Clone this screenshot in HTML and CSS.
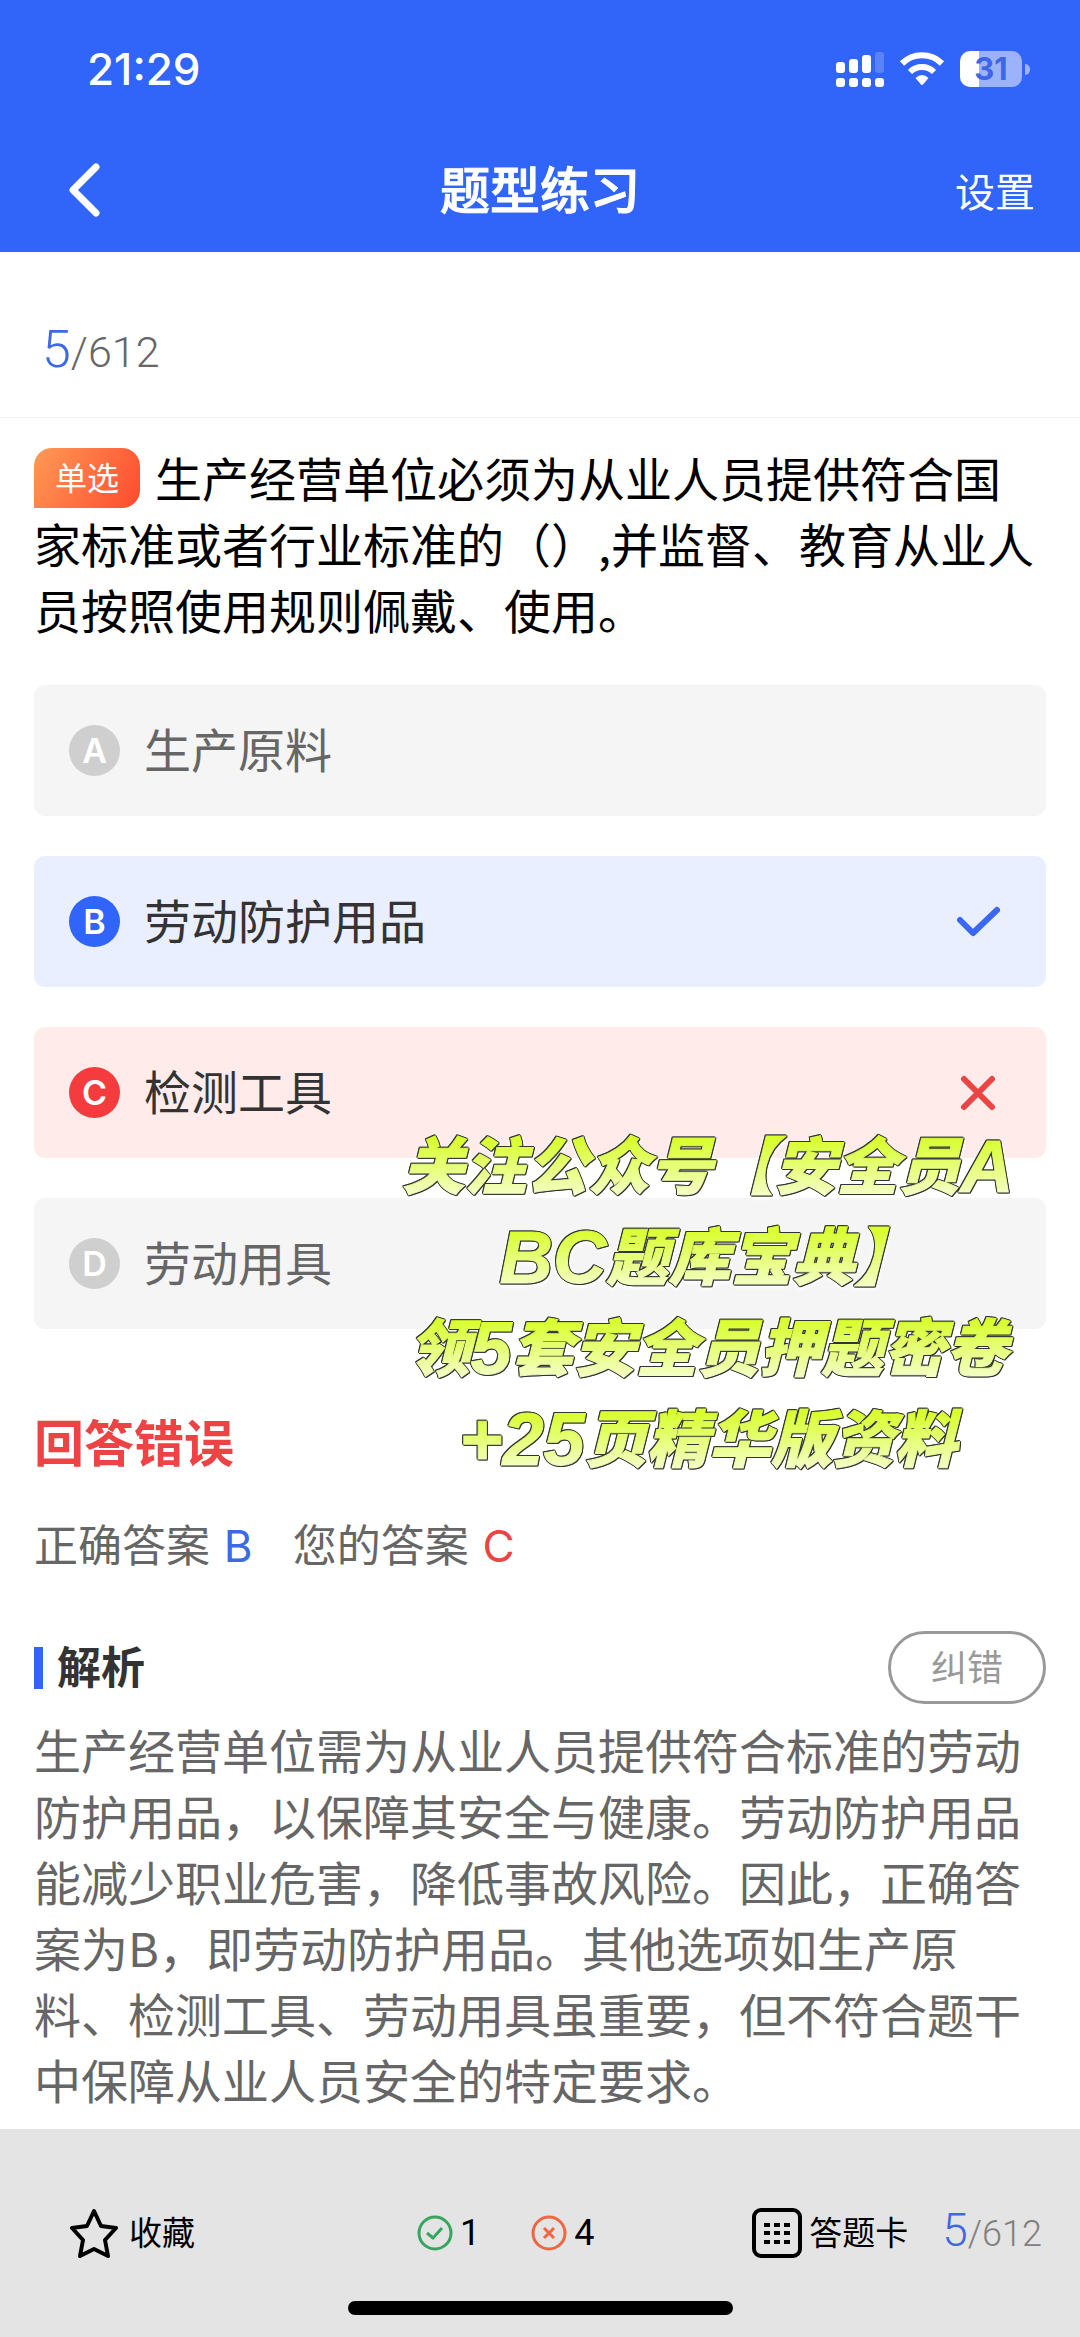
FILE: index.html
```html
<!DOCTYPE html>
<html lang="zh-CN">

<head>
    <meta charset="UTF-8">
    <meta name="viewport" content="width=device-width, initial-scale=1.0">
    <title>题型练习</title>
    <link rel="stylesheet" href="styles.css">
</head>

<body>
    <header class="header">
        <div class="status-bar">
            <span class="time">21:29</span>
            <div class="status-icons">
                <svg class="signal" width="48" height="36" viewBox="0 0 48 36" fill="#fff">
                    <rect x="0" y="11" width="9" height="11" rx="3" />
                    <rect x="13" y="8" width="9" height="14" rx="3" />
                    <rect x="26" y="4" width="9" height="18" rx="3" />
                    <rect x="39" y="1" width="9" height="21" rx="3" opacity="0.2" />
                    <rect x="0" y="27" width="9" height="9" rx="3" />
                    <rect x="13" y="27" width="9" height="9" rx="3" />
                    <rect x="26" y="27" width="9" height="9" rx="3" />
                    <rect x="39" y="27" width="9" height="9" rx="3" />
                </svg>
                <svg class="wifi" width="46" height="36" viewBox="0 0 46 36">
                    <path d="M3 12.500A28.500 28.500 0 0 1 43 12.500" fill="none" stroke="#fff" stroke-width="6" />
                    <path d="M11 21A17 17 0 0 1 35 21" fill="none" stroke="#fff" stroke-width="6" />
                    <path d="M16.500 27Q23 21 29.500 27L24 33.500Q23 34.500 22 33.500Z" fill="#fff" />
                </svg>
                <div class="battery">
                    <div class="battery-body">31</div>
                    <div class="battery-cap"></div>
                </div>
            </div>
        </div>
        <nav class="nav">
            <button class="back" aria-label="返回">
                <svg width="34" height="56" viewBox="0 0 34 56" fill="none" stroke="#fff" stroke-width="7"
                    stroke-linecap="round" stroke-linejoin="round">
                    <path d="M29 5L6 28L29 51" />
                </svg>
            </button>
            <h1 class="title">题型练习</h1>
            <a href="#" class="settings">设置</a>
        </nav>
    </header>

    <div class="progress"><span class="current">5</span>/612</div>

    <main class="content">
        <p class="question"><span class="tag">单选</span>生产经营单位必须为从业人员提供符合国家标准或者行业标准的（）,并监督、教育从业人员按照使用规则佩戴、使用。</p>

        <div class="options">
            <button class="option">
                <span class="letter">A</span>
                <span class="option-text">生产原料</span>
            </button>
            <button class="option right">
                <span class="letter">B</span>
                <span class="option-text">劳动防护用品</span>
                <svg class="mark" width="44" height="44" viewBox="0 0 44 44" fill="none" stroke="#3a68f2"
                    stroke-width="6" stroke-linecap="round" stroke-linejoin="round">
                    <path d="M4 20L17 33L41 10" />
                </svg>
            </button>
            <button class="option wrong">
                <span class="letter">C</span>
                <span class="option-text">检测工具</span>
                <svg class="mark" width="44" height="44" viewBox="0 0 44 44" fill="none" stroke="#ea4545"
                    stroke-width="6" stroke-linecap="round">
                    <path d="M8 8L36 36M36 8L8 36" />
                </svg>
            </button>
            <button class="option">
                <span class="letter">D</span>
                <span class="option-text">劳动用具</span>
            </button>

            <div class="promo">
                <span class="promo-line">关注公众号【安全员<span class="latin">A</span></span>
                <span class="promo-line"><span class="latin">BC</span>题库宝典】</span>
                <span class="promo-line">领<span class="latin">5</span>套安全员押题密卷</span>
                <span class="promo-line"><span class="latin">+25</span>页精华版资料</span>
            </div>
        </div>

        <h2 class="result">回答错误</h2>
        <div class="answers">
            <span>正确答案 <b class="blue">B</b></span>
            <span>您的答案 <b class="red">C</b></span>
        </div>

        <div class="analysis-head">
            <h3 class="analysis-title">解析</h3>
            <button class="report">纠错</button>
        </div>
        <p class="analysis">生产经营单位需为从业人员提供符合标准的劳动防护用品，以保障其安全与健康。劳动防护用品能减少职业危害，降低事故风险。因此，正确答案为B，即劳动防护用品。其他选项如生产原料、检测工具、劳动用具虽重要，但不符合题干中保障从业人员安全的特定要求。</p>
    </main>

    <footer class="footer">
        <div class="toolbar">
            <button class="tool">
                <svg class="star" width="50" height="50" viewBox="0 0 50 50" fill="none" stroke="#000"
                    stroke-width="4" stroke-linejoin="round">
                    <path d="M25 3L32 18L47 20L36 32L39 48L25 41L11 48L14 32L3 20L18 18Z" />
                </svg>
                <span class="tool-text">收藏</span>
            </button>
            <div class="counts">
                <span class="count">
                    <svg width="36" height="36" viewBox="0 0 36 36" fill="none" stroke="#35a660" stroke-width="3">
                        <circle cx="18" cy="18" r="16" />
                        <path d="M10 18L16 23L25 13" />
                    </svg>
                    1
                </span>
                <span class="count">
                    <svg width="36" height="36" viewBox="0 0 36 36" fill="none" stroke="#f26540" stroke-width="3">
                        <circle cx="18" cy="18" r="16" />
                        <path d="M13 13L23 23M23 13L13 23" />
                    </svg>
                    4
                </span>
            </div>
            <div class="sheet">
                <button class="tool">
                    <svg width="50" height="50" viewBox="0 0 50 50">
                        <rect x="2" y="2" width="46" height="46" rx="7" fill="none" stroke="#000" stroke-width="4" />
                        <path d="M12 17H38M12 25H38M12 34H38" stroke="#000" stroke-width="4" stroke-dasharray="6 4" />
                    </svg>
                    <span class="tool-text">答题卡</span>
                </button>
                <span class="page"><span class="current">5</span>/612</span>
            </div>
        </div>
        <div class="home-bar"></div>
    </footer>
</body>

</html>
```
FILE: styles.css
```css
:root {
    --blue: #3164f8;
    --red: #f43c3f;
    --text: #333;
    --gray: #666;
    --light-gray: #999;
}

* {
    margin: 0;
    padding: 0;
    box-sizing: border-box;
}

body {
    font-family: "Noto Sans CJK SC", sans-serif;
    background: #fff;
    color: #000;
}

button {
    font-family: inherit;
    border: none;
    background: none;
    cursor: pointer;
}

svg {
    display: block;
    flex-shrink: 0;
}

/* header */
.header {
    background: var(--blue);
    color: #fff;
    padding-bottom: 10px;
}

.status-bar {
    display: flex;
    justify-content: space-between;
    align-items: center;
    height: 138px;
    padding: 0 50px 0 87px;
}

.time {
    font-family: Inter, sans-serif;
    font-size: 44px;
    font-weight: 500;
}

.status-icons {
    display: flex;
    align-items: center;
    gap: 15px;
}

.battery {
    display: flex;
    align-items: center;
    gap: 3px;
}

.battery-body {
    width: 62px;
    height: 36px;
    border-radius: 10px;
    background: linear-gradient(90deg, #fff 31%, #9cb3fb 31%);
    color: #3e66e8;
    font-family: Inter, sans-serif;
    font-size: 31px;
    font-weight: 700;
    line-height: 36px;
    text-align: center;
}

.battery-cap {
    width: 5px;
    height: 11px;
    border-radius: 0 6px 6px 0;
    background: #9cb3fb;
}

.nav {
    display: grid;
    grid-template-columns: 1fr auto 1fr;
    align-items: center;
    height: 104px;
    padding: 0 45px;
}

.back {
    justify-self: start;
    padding-left: 22px;
}

.title {
    padding-bottom: 6px;
    font-size: 50px;
    font-weight: 500;
    line-height: 66px;
    -webkit-text-stroke: 1px #fff;
}

.settings {
    justify-self: end;
    color: #fff;
    font-size: 40px;
    text-decoration: none;
}

/* progress */
.progress {
    padding: 67px 42px 32px;
    border-bottom: 1px solid #f2f2f2;
    color: var(--gray);
    font-family: Roboto, sans-serif;
    font-size: 43px;
    font-weight: 300;
    line-height: 66px;
}

.current {
    color: #3d68e6;
    font-size: 52px;
    line-height: 1;
}

/* question */
.content {
    padding: 26px 34px 17px;
}

.question,
.analysis {
    font-size: 47px;
    line-height: 66px;
}

.tag {
    display: inline-block;
    width: 106px;
    height: 60px;
    margin: 4px 15px 0 0;
    border-radius: 18px 18px 18px 0;
    background: linear-gradient(120deg, #ff9a56, #ff4a2e);
    color: #fff;
    font-size: 32px;
    line-height: 56px;
    text-align: center;
    vertical-align: top;
}

.options {
    position: relative;
    display: flex;
    flex-direction: column;
    gap: 40px;
    margin-top: 43px;
}

.option {
    display: flex;
    align-items: center;
    height: 131px;
    padding: 0 46px 0 35px;
    border-radius: 11px;
    background: #f5f5f5;
    color: var(--gray);
    font-size: 47px;
    line-height: 66px;
    text-align: left;
}

.option-text {
    padding-bottom: 6px;
}

.letter {
    width: 51px;
    height: 51px;
    margin-right: 24px;
    border-radius: 50%;
    background: #d0cfd0;
    color: #fff;
    font-family: Inter, sans-serif;
    font-size: 34px;
    font-weight: 600;
    line-height: 51px;
    text-align: center;
}

.mark {
    margin-left: auto;
}

.right {
    background: #e9efff;
    color: var(--text);
}

.right .letter {
    background: var(--blue);
}

.wrong {
    background: #feebea;
    color: var(--text);
}

.wrong .letter {
    background: var(--red);
}

/* promo text over the options */
.promo {
    position: absolute;
    top: 432px;
    right: 28px;
    width: 620px;
    filter: drop-shadow(1px 0 0 #333) drop-shadow(0 1px 0 #333) drop-shadow(-1px -1px 0 #333) drop-shadow(0 2px 2px #fff);
    pointer-events: none;
}

.promo-line {
    display: block;
    height: 91px;
    background: linear-gradient(#d9ff2e 25%, #f4ffc4 85%);
    -webkit-background-clip: text;
    background-clip: text;
    color: transparent;
    -webkit-text-stroke: 1px transparent;
    font-size: 62px;
    font-style: italic;
    font-weight: 900;
    line-height: 91px;
    text-align: center;
    white-space: nowrap;
}

.latin {
    font-family: "Liberation Sans", sans-serif;
    font-size: 74px;
    line-height: 1;
    vertical-align: -3px;
}

/* result */
.result {
    margin-top: 78px;
    color: #ee4345;
    font-size: 50px;
    line-height: 66px;
}

.answers {
    display: flex;
    gap: 40px;
    margin-top: 37px;
    color: var(--gray);
    font-size: 44px;
    line-height: 66px;
}

.answers b {
    margin-left: 4px;
    font-family: Inter, sans-serif;
    font-weight: 400;
    line-height: 1;
}

.blue {
    color: #3d68e6;
}

.red {
    color: #ea4545;
}

.analysis-head {
    display: flex;
    justify-content: space-between;
    align-items: center;
    margin-top: 55px;
}

.analysis-title {
    display: flex;
    align-items: center;
    gap: 14px;
    padding-bottom: 5px;
    color: var(--text);
    font-size: 44px;
    line-height: 66px;
}

.analysis-title::before {
    content: "";
    width: 9px;
    height: 42px;
    margin-top: 5px;
    background: var(--blue);
}

.report {
    width: 158px;
    height: 73px;
    padding-bottom: 5px;
    border: 3px solid var(--light-gray);
    border-radius: 37px;
    color: var(--light-gray);
    font-size: 36px;
}

.analysis {
    margin-top: 12px;
    color: var(--gray);
}

/* footer */
.footer {
    height: 208px;
    padding-top: 72px;
    background: #e4e4e4;
}

.toolbar {
    display: flex;
    justify-content: space-between;
    align-items: center;
    height: 64px;
    padding: 0 38px 0 69px;
}

.tool {
    display: flex;
    align-items: center;
    gap: 10px;
    color: #000;
    font-size: 33px;
}

.tool-text {
    padding-bottom: 4px;
}

.counts {
    display: flex;
    gap: 51px;
    margin-left: 64px;
}

.count {
    display: flex;
    align-items: center;
    gap: 7px;
    font-family: Roboto, sans-serif;
    font-size: 36px;
    line-height: 50px;
}

.sheet {
    display: flex;
    align-items: center;
    gap: 34px;
}

.sheet .tool {
    gap: 7px;
}

.page {
    color: #808080;
    font-family: Roboto, sans-serif;
    font-size: 36px;
    font-weight: 300;
    line-height: 50px;
}

.page .current {
    font-size: 46px;
}

.home-bar {
    width: 385px;
    height: 14px;
    margin: 36px auto 0;
    border-radius: 7px;
    background: #000;
}
```
